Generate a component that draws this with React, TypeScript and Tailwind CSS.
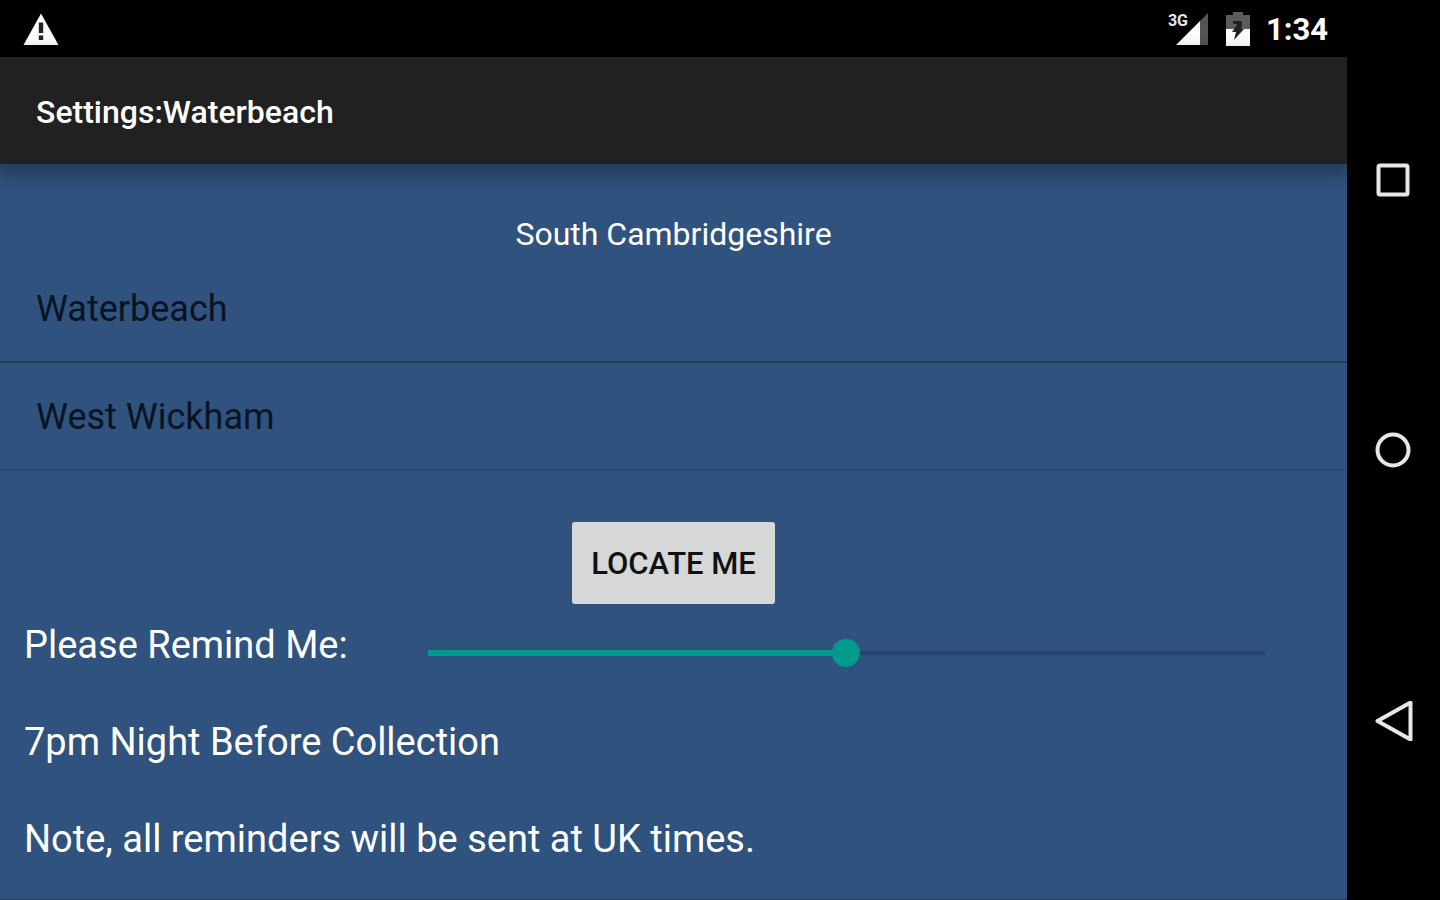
import { useState } from "react";
import clsx from "clsx";

type TVillage = {
  id: number;
  name: string;
};

const VILLAGES: TVillage[] = [
  { id: 1, name: "Waterbeach" },
  { id: 2, name: "West Wickham" },
];

const StatusBar = () => (
  <div className="flex h-[57px] items-center justify-between bg-black pr-[19px] pl-[23px] text-white">
    <svg className="h-8 w-9" viewBox="0 0 36 32" aria-hidden="true">
      <path d="M18 0.5 35.5 32H0.5Z" fill="#fff" />
      <path d="M15.800 9.500h4.400v10.500h-4.400zM15.800 22.500h4.400v4.500h-4.400z" fill="#222" />
    </svg>
    <div className="flex items-center">
      <div className="relative mr-[18px] h-8 w-10">
        <span className="absolute top-0 left-0 text-[16px] leading-[16px] font-bold text-gray-200">
          3G
        </span>
        <svg className="h-8 w-10" viewBox="0 0 40 32" aria-hidden="true">
          <path d="M40 0V32H32V8Z" fill="#555" />
          <path d="M32 8V32H8Z" fill="#fff" />
        </svg>
      </div>
      <svg className="mr-4 h-[34px] w-6" viewBox="0 0 24 34" aria-hidden="true">
        <path d="M7 0h10v3h7v15H0V3h7Z" fill="#5c5c5c" />
        <path d="M0 17h24v17H0Z" fill="#fff" />
        <path d="M7 9h9v5l-1 3h3L8 28l2-8H6l5-7V12H7Z" fill="#222" />
      </svg>
      <span className="pt-[3px] text-[31px] leading-[40px] font-bold">1:34</span>
    </div>
  </div>
);

const NavBar = () => {
  const button = "flex flex-1 items-center justify-center";

  return (
    <nav className="flex w-[93px] shrink-0 flex-col bg-black py-11 pr-0.5 text-gray-200">
      <button className={button} aria-label="Overview">
        <svg className="size-10" viewBox="0 0 40 40" fill="none">
          <rect
            x="5.500"
            y="6.500"
            width="29"
            height="29"
            rx="1.500"
            stroke="currentColor"
            strokeWidth="4"
          />
        </svg>
      </button>
      <button className={button} aria-label="Home">
        <svg className="size-10" viewBox="0 0 40 40" fill="none">
          <circle cx="20" cy="20" r="15.500" stroke="currentColor" strokeWidth="4" />
        </svg>
      </button>
      <button className={button} aria-label="Back">
        <svg className="size-10" viewBox="0 0 40 40" fill="none">
          <path
            d="M37.500 1.500V38.500L4.500 20Z"
            stroke="currentColor"
            strokeWidth="4"
            strokeLinejoin="round"
          />
        </svg>
      </button>
    </nav>
  );
};

export default function App() {
  const [selected, setSelected] = useState(VILLAGES[0]);
  const [reminder, setReminder] = useState(50);

  return (
    <div className="flex min-h-screen bg-black font-[Roboto,sans-serif]">
      <div className="flex min-w-0 flex-1 flex-col overflow-hidden">
        <StatusBar />
        <header className="relative flex h-[107px] items-center bg-[#212121] px-9 pt-0.5 shadow-[0_2px_18px_6px_rgba(0,0,0,0.35)]">
          <h1 className="text-[32px] leading-[40px] font-medium text-white">
            Settings:{selected.name}
          </h1>
        </header>
        <main className="flex flex-1 flex-col border-b border-[#27405f] bg-[#2f527e] text-white">
          <h2 className="pt-[49px] text-center text-[32px] leading-[42px]">
            South Cambridgeshire
          </h2>
          <ul>
            {VILLAGES.map((village) => (
              <li key={village.id}>
                <button
                  className={clsx(
                    "flex h-[108px] w-full items-center border-b-2 px-9 pt-0.5 text-left text-[36px] leading-[44px] text-[#0a1420]",
                    village.id === VILLAGES.length
                      ? "border-[#2c486f]"
                      : "border-[#263f5c]"
                  )}
                  onClick={() => setSelected(village)}
                >
                  {village.name}
                </button>
              </li>
            ))}
          </ul>
          <button className="mt-[51px] self-center rounded-[3px] bg-[#d6d7d7] px-[19px] pt-[22px] pb-5 text-[31px] leading-[40px] font-medium text-[#111]">
            LOCATE ME
          </button>
          <div className="mt-[17px] flex flex-col gap-[49px] px-6 text-[38px] leading-[48px]">
            <div className="flex items-end">
              <label htmlFor="reminder" className="mr-20">
                Please Remind Me:
              </label>
              <input
                id="reminder"
                type="range"
                min={0}
                max={100}
                value={reminder}
                onChange={(e) => setReminder(Number(e.target.value))}
                style={{ backgroundSize: `${reminder}% 6px, 100% 4px` }}
                className="mr-[58px] h-8 min-w-0 flex-1 appearance-none bg-[linear-gradient(#009b8a,#009b8a),linear-gradient(#29426f,#29426f)] bg-[position:left_center] bg-no-repeat [&::-webkit-slider-thumb]:size-7 [&::-webkit-slider-thumb]:appearance-none [&::-webkit-slider-thumb]:rounded-full [&::-webkit-slider-thumb]:bg-[#009b8a]"
              />
            </div>
            <p>7pm Night Before Collection</p>
            <p>Note, all reminders will be sent at UK times.</p>
          </div>
        </main>
      </div>
      <NavBar />
    </div>
  );
}
